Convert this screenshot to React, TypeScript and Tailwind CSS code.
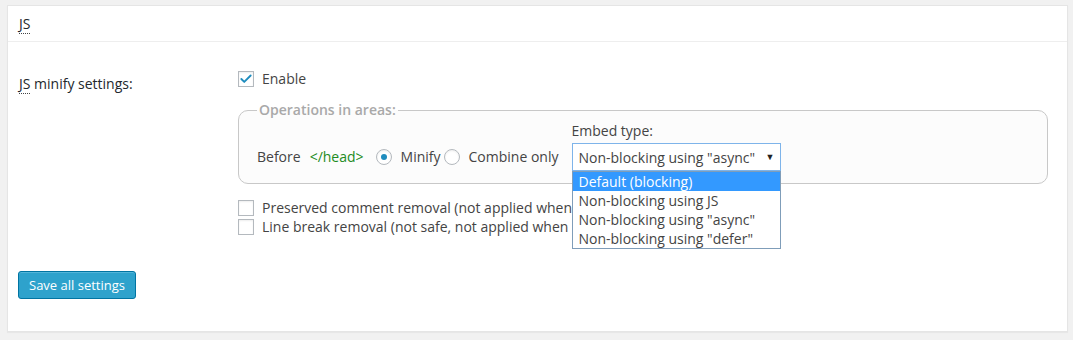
import { Check } from "lucide-react";

const font = "font-['Open_Sans','Liberation_Sans',sans-serif]";

function Checkbox({ checked }: { checked?: boolean }) {
  return (
    <span className="relative flex h-4 w-4 shrink-0 items-center justify-center border border-[#b4b9be] bg-white shadow-[inset_0_1px_2px_rgba(0,0,0,0.07)]">
      {checked && <Check className="h-[14px] w-[14px] text-[#1e8cbe]" strokeWidth={3.2} />}
    </span>
  );
}

function Radio({ checked }: { checked?: boolean }) {
  return (
    <span className="flex h-4 w-4 shrink-0 items-center justify-center rounded-full border border-[#b4b9be] bg-white shadow-[inset_0_1px_2px_rgba(0,0,0,0.07)]">
      {checked && <span className="h-[6px] w-[6px] rounded-full bg-[#1e8cbe]" />}
    </span>
  );
}

const options = [
  "Default (blocking)",
  "Non-blocking using JS",
  'Non-blocking using "async"',
  'Non-blocking using "defer"',
];

export default function App() {
  return (
    <div className={`${font} min-h-[340px] bg-[#f1f1f1] pt-[5px] pl-[7px] pr-[5px] text-[14px] text-[#444]`}>
      <div className="h-[327px] border border-[#e5e5e5] bg-white shadow-[0_1px_1px_rgba(0,0,0,0.04)]">
        {/* Header */}
        <div className="h-[36px] border-b border-[#eee] pl-[11px] pt-[7px] text-[14px] text-[#23282d]">
          <abbr className="border-b border-dotted border-[#444] no-underline leading-[19px]">JS</abbr>
        </div>

        {/* Settings row */}
        <div className="flex pt-[27px] pl-[11px]">
          <div className="w-[219px] shrink-0 pt-[4px] text-[#23282d]">
            <span>
              <abbr className="border-b border-dotted border-[#444] no-underline">JS</abbr> minify settings:
            </span>
          </div>

          <div className="flex-1">
            <label className="flex items-center gap-2 leading-[20px]">
              <Checkbox checked />
              <span>Enable</span>
            </label>

            <fieldset className="relative mt-[12px] mr-[19px] h-[83px] rounded-[10px] border border-[#c8c8c8] bg-[#fcfcfc] px-[18px]">
              <legend className="ml-0 px-[2px] text-[14px] font-semibold leading-[18px] text-[#a9a9a9]">
                Operations in areas:
              </legend>
              <div className="flex items-end pt-[2px]">
                <div className="flex items-center pb-[4px] leading-[20px]">
                  <span>Before</span>
                  <span className="ml-[9px] text-[#228b22]">&lt;/head&gt;</span>
                  <span className="ml-[12px]"><Radio checked /></span>
                  <span className="ml-[9px]">Minify</span>
                  <span className="ml-[3px]"><Radio /></span>
                  <span className="ml-[9px]">Combine only</span>
                </div>
                <div className="relative ml-[13px]">
                  <div className="leading-[20px]">Embed type:</div>
                  <div className="mt-[2px] flex h-[28px] w-[209px] items-center justify-between border border-[#7eb4ea] bg-white pl-[6px] pr-[5px]">
                    <span>Non-blocking using "async"</span>
                    <span className="text-[9px] text-[#222]">▼</span>
                  </div>
                  <ul className="absolute left-0 top-[50px] z-10 w-[209px] border border-[#7f9db9] bg-white leading-[19px]">
                    {options.map((o, i) => (
                      <li
                        key={o}
                        className={`h-[19px] pl-[6px] ${i === 0 ? "bg-[#3399ff] text-white" : "text-[#444]"}`}
                      >
                        {o}
                      </li>
                    ))}
                  </ul>
                </div>
              </div>
            </fieldset>

            {/* the open list covers the rest of these two labels */}
            <div className="mt-[16px] space-y-[3px] leading-[16px]">
              <label className="flex items-center gap-2 whitespace-nowrap">
                <Checkbox />
                <span>Preserved comment removal (not applied when</span>
              </label>
              <label className="flex items-center gap-2 whitespace-nowrap">
                <Checkbox />
                <span>Line break removal (not safe, not applied when</span>
              </label>
            </div>
          </div>
        </div>

        {/* Footer */}
        <div className="pl-[10px] pt-[36px]">
          <button className="h-[28px] rounded-[3px] border border-[#0074a2] bg-[#2ea2cc] px-[10px] text-[13px] leading-[26px] text-white shadow-[inset_0_1px_0_rgba(120,200,230,0.5)]">
            Save all settings
          </button>
        </div>
      </div>
    </div>
  );
}
